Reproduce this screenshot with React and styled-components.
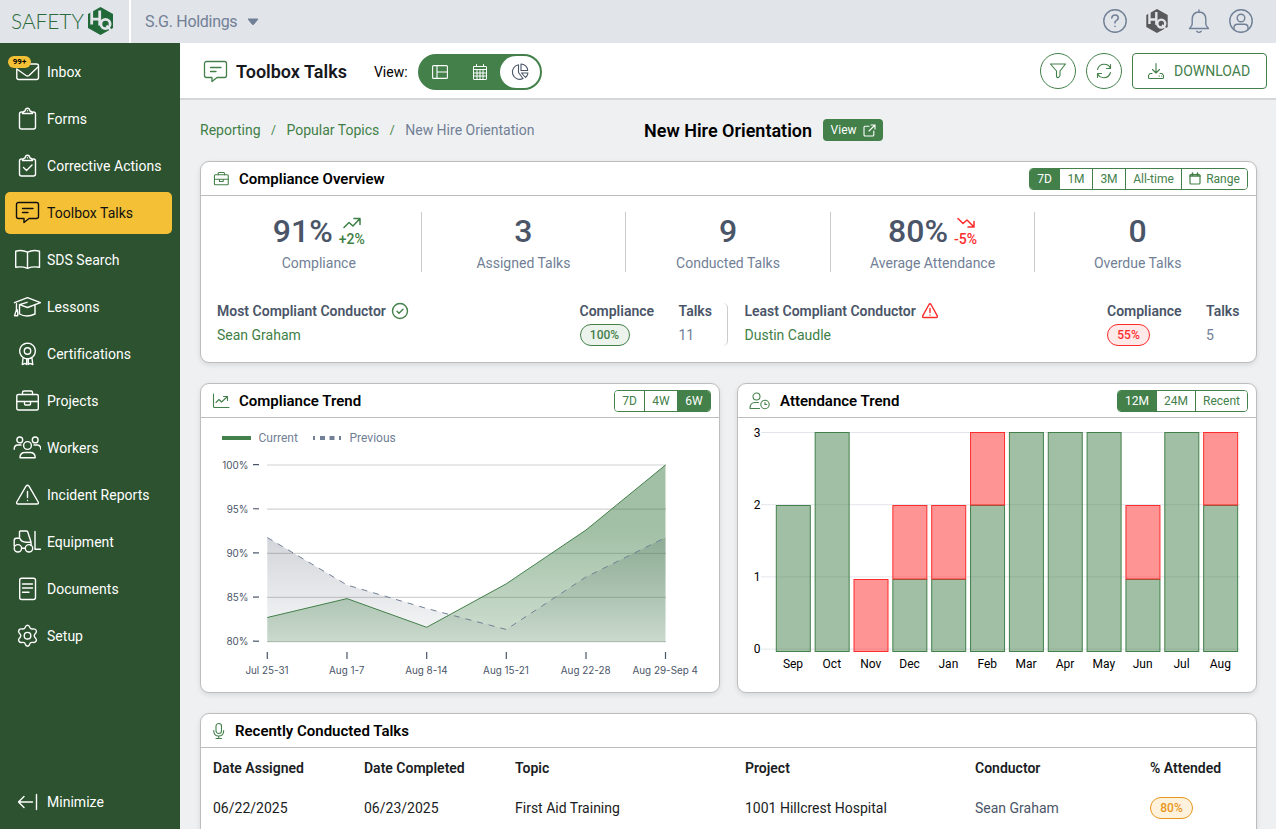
import React from "react";
import styled, { createGlobalStyle } from "styled-components";

const c = {
  green: "#43804a",
  greenText: "#3f7f46",
  side: "#2c522f",
  yellow: "#f4c035",
  slate: "#718096",
  dark: "#4a5568",
  red: "#fb2c2c",
  line: "#bdbdbd",
};

const GlobalStyle = createGlobalStyle`
  * { box-sizing: border-box; }
  body { margin: 0; background: #eff0f2; font-family: Roboto, "Liberation Sans", sans-serif; font-size: 14px; color: #000; overflow: hidden; }
`;

const Page = styled.div`
  display: flex;
  flex-direction: column;
  width: 1276px;
  height: 829px;
  overflow: hidden;
`;

const TopBar = styled.header`
  display: flex;
  align-items: center;
  flex: none;
  height: 43px;
  background: #e1e4e9;
  color: ${c.slate};
`;

const LogoCell = styled.div`
  display: flex;
  align-items: center;
  width: 131px;
  height: 43px;
  padding: 0 0 1px 11px;
  border-right: 2px solid #fff;
`;

const LogoText = styled.span`
  width: 76px;
  font-family: Lato, sans-serif;
  font-weight: 300;
  font-size: 20.8px;
  line-height: 40px;
  color: #2b6a3b;
  white-space: nowrap;
`;

const Company = styled.div`
  display: flex;
  align-items: center;
  gap: 10px;
  flex: 1;
  padding-left: 14px;
  font-size: 16px;
  letter-spacing: -0.3px;
`;

const TopIcons = styled.div`
  display: flex;
  align-items: center;
  gap: 18px;
  padding: 0 23px 1px 0;
`;

const Body = styled.div`
  display: flex;
  flex: 1;
  min-height: 0;
`;

const Sidebar = styled.nav`
  display: flex;
  flex-direction: column;
  justify-content: space-between;
  flex: none;
  width: 180px;
  padding: 8px 8px 6px 5px;
  background: ${c.side};
`;

const NavList = styled.div`
  display: flex;
  flex-direction: column;
  gap: 5px;
`;

const NavItem = styled.div`
  position: relative;
  display: flex;
  align-items: center;
  gap: 6px;
  height: 42px;
  padding-left: 8px;
  border-radius: 5px;
  font-size: 14px;
  letter-spacing: 0.02px;
  white-space: nowrap;
  color: ${(p) => (p.$active ? "#111" : "#fff")};
  background: ${(p) => (p.$active ? c.yellow : "transparent")};
`;

const Badge = styled.span`
  position: absolute;
  left: 3px;
  top: 5px;
  width: 23px;
  height: 12px;
  border-radius: 6px;
  background: ${c.yellow};
  color: #000;
  font-size: 8px;
  font-weight: 700;
  line-height: 12px;
  text-align: center;
`;

const Main = styled.main`
  display: flex;
  flex-direction: column;
  flex: 1;
  min-width: 0;
`;

const PageHead = styled.div`
  display: flex;
  align-items: center;
  flex: none;
  height: 57px;
  padding: 2px 9px 0 21px;
  border-bottom: 2px solid #d5d6d8;
  background: #fff;
`;

const HeadIcon = styled.div`
  padding-top: 1px;
  color: ${c.green};
`;

const PageTitle = styled.h1`
  margin: 0 27px 0 7px;
  font-size: 18px;
  font-weight: 600;
  line-height: 22px;
  color: #16181d;
`;

const ViewLabel = styled.span`
  width: 44px;
`;

const Toggle = styled.div`
  display: flex;
  align-items: center;
  width: 124px;
  height: 36px;
  padding: 2px;
  border-radius: 18px;
  background: ${c.green};
`;

const ToggleOption = styled.div`
  display: flex;
  align-items: center;
  justify-content: center;
  width: 40px;
  height: 32px;
  border-radius: 16px;
  background: ${(p) => (p.$on ? "#fff" : "transparent")};
  color: ${(p) => (p.$on ? c.dark : "#fff")};
`;

const HeadActions = styled.div`
  display: flex;
  gap: 10px;
  margin-left: auto;
  margin-top: -1px;
  color: ${c.green};
`;

const RoundButton = styled.div`
  display: flex;
  align-items: center;
  justify-content: center;
  width: 36px;
  height: 36px;
  border: 1px solid ${c.green};
  border-radius: 50%;
`;

const DownloadButton = styled.div`
  display: flex;
  align-items: center;
  gap: 9px;
  width: 135px;
  height: 36px;
  padding-left: 14px;
  border: 1px solid ${c.green};
  border-radius: 4px;
  font-size: 14px;
`;

const Content = styled.div`
  display: flex;
  flex-direction: column;
  padding: 0 19px 0 20px;
`;

const CrumbRow = styled.div`
  display: flex;
  align-items: center;
  flex: none;
  height: 61px;
  padding-bottom: 1px;
`;

const Crumbs = styled.div`
  display: flex;
  align-items: center;
  width: 444px;
  gap: 10.5px;
  color: ${c.greenText};
`;

const CrumbSlash = styled.span`
  font-size: 12px;
`;

const CrumbCurrent = styled.span`
  color: ${c.slate};
`;

const TopicTitle = styled.h2`
  margin: 0 11px 0 0;
  padding-top: 1px;
  font-size: 18px;
  font-weight: 600;
  line-height: 22px;
`;

const ViewButton = styled.div`
  display: flex;
  align-items: center;
  justify-content: center;
  gap: 6px;
  width: 60px;
  height: 22px;
  border-radius: 4px;
  background: ${c.green};
  color: #fff;
  font-size: 12px;
`;

const Card = styled.section`
  flex: ${(p) => (p.$grow ? "1" : "none")};
  height: ${(p) => p.$h}px;
  border: 1px solid ${c.line};
  border-radius: 9px;
  background: #fff;
  box-shadow: 0 2px 5px rgba(0, 0, 0, 0.1);
  overflow: hidden;
`;

const CardHead = styled.div`
  display: flex;
  align-items: center;
  gap: ${(p) => p.$gap || 9}px;
  height: 34px;
  padding: 0 8px 0 11px;
  border-bottom: 1px solid ${c.line};
  color: ${c.green};
`;

const CardTitle = styled.h3`
  flex: 1;
  margin: 0;
  font-size: 15px;
  font-weight: 600;
  line-height: 20px;
  color: #000;
`;

const Segments = styled.div`
  display: flex;
  height: 22px;
  border: 1px solid ${c.green};
  border-radius: 4px;
  overflow: hidden;
`;

const Segment = styled.div`
  display: flex;
  align-items: center;
  justify-content: center;
  gap: 5px;
  width: ${(p) => p.$w}px;
  font-size: 12px;
  color: ${(p) => (p.$on ? "#fff" : c.green)};
  background: ${(p) => (p.$on ? c.green : "#fff")};
  & + & { border-left: 1px solid ${c.green}; }
`;

const Stats = styled.div`
  display: grid;
  grid-template-columns: repeat(5, 1fr);
  grid-template-rows: 60px;
  height: 60px;
  margin: 16px 16px 0;
`;

const Stat = styled.div`
  display: flex;
  flex-direction: column;
  align-items: center;
  color: ${c.slate};
  &:not(:last-child) { border-right: 1px solid #ccc; }
`;

const StatTop = styled.div`
  display: flex;
  flex: none;
  align-items: center;
  gap: 6px;
  height: 38px;
  color: ${c.dark};
`;

const StatValue = styled.span`
  font-size: 32px;
  font-weight: 500;
  line-height: 38px;
`;

const Delta = styled.span`
  display: flex;
  flex-direction: column;
  align-items: center;
  gap: 2px;
  padding-top: 1px;
  font-size: 14px;
  font-weight: 500;
  line-height: 16px;
  color: ${(p) => (p.$down ? c.red : c.greenText)};
`;

const StatLabel = styled.span`
  line-height: 26px;
`;

const Conductors = styled.div`
  display: grid;
  grid-template-columns: 511px 1fr;
  margin: 31px 16px 0;
`;

const Conductor = styled.div`
  display: grid;
  grid-template-columns: 1fr 99px ${(p) => (p.$first ? "48.5px" : "34px")};
  grid-template-rows: 16px 27px;
  align-items: center;
  height: 43px;
  padding-left: ${(p) => (p.$first ? 0 : 16.5)}px;
  border-right: ${(p) => (p.$first ? "1px solid #ccc" : "none")};
  border-radius: ${(p) => (p.$first ? 5 : 0)}px;
`;

const ConductorHead = styled.span`
  display: flex;
  align-items: center;
  gap: 5px;
  height: 16px;
  font-weight: 600;
  line-height: 16px;
  color: ${c.dark};
  white-space: nowrap;
`;

const Person = styled.span`
  padding-top: 4px;
  color: ${(p) => (p.$muted ? c.slate : c.greenText)};
`;

const tones = {
  good: [c.green, "#ecf3ed"],
  bad: [c.red, "#ffe9e9"],
  warn: ["#e8971c", "#fef2dd"],
};

const Pill = styled.span`
  display: inline-flex;
  align-items: center;
  justify-content: center;
  width: ${(p) => p.$w}px;
  height: 22px;
  margin-top: ${(p) => p.$mt || 0}px;
  border: 1px solid ${(p) => tones[p.$tone][0]};
  border-radius: 11px;
  background: ${(p) => tones[p.$tone][1]};
  color: ${(p) => tones[p.$tone][0]};
  font-size: 12px;
  font-weight: 500;
`;

const Trends = styled.div`
  display: flex;
  gap: 17px;
  margin: 20px 0;
`;

const Chart = styled.svg`
  display: block;
`;

const Icon = styled.svg`
  display: block;
  flex: none;
  fill: none;
  stroke: currentColor;
  stroke-width: ${(p) => p.$sw || 1.4};
  stroke-linecap: round;
  stroke-linejoin: round;
`;

const Table = styled.div`
  display: grid;
  grid-template-columns: 151px 151px 230px 230px 175px 1fr;
  grid-auto-rows: 40px;
  align-items: center;
  padding-left: 12px;
`;

const Th = styled.span`
  font-weight: 600;
  color: #1a1d23;
`;

const Td = styled.span`
  color: ${(p) => (p.$muted ? c.dark : "#1a1d23")};
`;

const shapes = {
  inbox: (
    <>
      <path d="M14 6h9.5a2 2 0 0 1 2 2v11.500a2 2 0 0 1-2 2H5.800a2 2 0 0 1-2-2V11" />
      <path d="M4.500 11.500l8.500 6q1.500 1 3 0l9-8.500" />
    </>
  ),
  forms: (
    <>
      <path d="M9 7H8.500a2 2 0 0 0-2 2v13a2 2 0 0 0 2 2h12a2 2 0 0 0 2-2V9a2 2 0 0 0-2-2H20" />
      <path d="M9.500 8.500q0-2 2.500-2.500q.5-2.800 2.500-2.800T17 6q2.500.5 2.500 2.500z" />
      <path d="M14.500 5.700v.1" />
    </>
  ),
  bubble: (
    <>
      <path d="M5.500 3.500h18a2 2 0 0 1 2 2v12a2 2 0 0 1-2 2H16l-5 4v-4H5.500a2 2 0 0 1-2-2v-12a2 2 0 0 1 2-2z" />
      <path d="M9.500 9.500h10.500M9.500 13.500h5.500" />
    </>
  ),
  book: (
    <path d="M14.500 6.200Q9 3.500 2.700 5.200V21.300Q9 20.200 14.500 22.300Q20 20.200 26.500 21.300V5.200Q20 3.500 14.500 6.200zM14.500 6.200v16" />
  ),
  cap: (
    <>
      <path d="M1.500 9.700L14.500 4.700L27.500 9.700L14.500 14.500L6.500 11.700L14 9.300" />
      <path d="M6.500 12.500V21q7 4 15.500 0v-8.500M3.500 10.700q.8 6-2 12h3.200q.5-2-.5-6" />
    </>
  ),
  award: (
    <>
      <circle cx="14.500" cy="11" r="7.800" strokeDasharray="3 .5" />
      <circle cx="14.500" cy="11" r="3.200" />
      <path d="M10 18.500L9.300 24.500L12 23.400L13.700 24.500V19.500M19 18.500L19.800 24.500L17 23.400L15.300 24.500V19.500" />
    </>
  ),
  briefcase: (
    <>
      <rect x="3.800" y="7.500" width="21.500" height="15.500" rx="1.500" />
      <path d="M9.500 7.500V5.500a1.500 1.500 0 0 1 1.500-1.500h7a1.500 1.500 0 0 1 1.500 1.500v2M3.800 14.500h21.500M11.500 14.500v2.500q0 1 1 1h4q1 0 1-1v-2.500" />
    </>
  ),
  workers: (
    <>
      <circle cx="6.800" cy="5.900" r="2.900" />
      <circle cx="22.200" cy="5.900" r="2.900" />
      <circle cx="14.500" cy="11.500" r="3.900" />
      <path d="M7 23.700h15.200q0-5.200-5-5.200h-5.200q-5 0-5 5.200zM1.200 15.300q0-4.300 3.600-4.300h3.200M27.800 15.300q0-4.300-3.600-4.300H21" />
    </>
  ),
  warning: (
    <>
      <path d="M13 5.200q1.500-2 3 0L25.200 21q.8 2-1.200 2H5q-2 0-1.200-2z" />
      <path d="M14.500 10.500v6M14.500 19.500v.1" />
    </>
  ),
  forklift: (
    <>
      <circle cx="4.900" cy="20.300" r="3.700" />
      <circle cx="16" cy="20.300" r="3.700" />
      <path d="M1.200 18V12.500q0-2 2-2.200L6.500 10V4q0-1 1-1h6q.8 0 1.200.8L18 14v3.500M7 10.500q1 3.500 6 3.700H18M8.600 20.300h3.700M22 3.500V21.200h5.500" />
    </>
  ),
  document: (
    <>
      <rect x="6.700" y="3.200" width="15.800" height="21.300" rx="2" />
      <path d="M9.500 9h10M9.500 13h10M9.500 17.200h6.500" />
    </>
  ),
  gear: (
    <>
      <circle cx="14.500" cy="13.700" r="3.300" />
      <path d="M12.300 5.200q.5-2 2.200-2t2.200 2q.5 2.200 3 1.800q2.300-.6 3.300 1t-.2 3q-1.600 1.600-1.600 2.700t1.600 2.700q1.200 1.500.2 3t-3.300 1q-2.500-.4-3 1.800q-.5 2-2.200 2t-2.200-2q-.5-2.200-3-1.800q-2.300.6-3.300-1t.2-3q1.600-1.600 1.600-2.700t-1.600-2.700q-1.200-1.500-.2-3t3.300-1q2.500.4 3-1.800z" />
    </>
  ),
  minimize: <path d="M5.500 14h14M11 8.500L5.500 14L11 19.500M23.500 6.500v15" />,
};
shapes.check = (
  <>
    {shapes.forms}
    <path d="M10.500 15.500l3 3l5.500-5.500" />
  </>
);

const navItems = [
  ["inbox", "Inbox"],
  ["forms", "Forms"],
  ["check", "Corrective Actions"],
  ["bubble", "Toolbox Talks"],
  ["book", "SDS Search"],
  ["cap", "Lessons"],
  ["award", "Certifications"],
  ["briefcase", "Projects"],
  ["workers", "Workers"],
  ["warning", "Incident Reports"],
  ["forklift", "Equipment"],
  ["document", "Documents"],
  ["gear", "Setup"],
];

const Glyph = ({ name, size = 28, sw }) => (
  <Icon width={size} height={size} viewBox="0 0 28 28" $sw={sw}>
    {shapes[name]}
  </Icon>
);

const HexMark = ({ color, bg, width, height }) => (
  <svg width={width} height={height} viewBox="0 0 26 28">
    <path d="M13 0L25.500 7V21L13 28L.5 21V7z" fill={color} />
    <g fill="none" stroke={bg} strokeWidth="2.800">
      <path d="M4.200 3v14.500M4.200 12.200h8M12.200 3.500v15" />
      <circle cx="18" cy="17" r="4.600" />
      <path d="M19 18.500l4.500 5" strokeWidth="2" />
    </g>
  </svg>
);

const SegmentGroup = ({ items, active }) => (
  <Segments>
    {items.map(([label, w]) => (
      <Segment key={label} $w={w} $on={label === active}>
        {label === "Range" && (
          <Icon width="12" height="13" viewBox="0 0 12 13" $sw={1.2}>
            <rect x="1" y="2.500" width="10" height="9.500" rx="1" />
            <path d="M1 4h10M3.500 1v2M8.500 1v2" strokeWidth="1.600" />
          </Icon>
        )}
        {label}
      </Segment>
    ))}
  </Segments>
);

const Arrow = ({ down }) => (
  <Icon width="20" height="12" viewBox="0 0 20 12" $sw={1.5}>
    {down ? (
      <path d="M2 1.500l5 5l4-3.500l7 7M18 4.500v5.500h-6" />
    ) : (
      <path d="M2 10.500l5-5l4 3.500l7-7.500M12 1.500h6v6" />
    )}
  </Icon>
);

const stats = [
  ["91%", "Compliance", "+2%"],
  ["3", "Assigned Talks"],
  ["9", "Conducted Talks"],
  ["80%", "Average Attendance", "-5%"],
  ["0", "Overdue Talks"],
];

const weekX = [66.3, 146, 225.7, 305.3, 385, 464.5];
const weeks = ["Jul 25-31", "Aug 1-7", "Aug 8-14", "Aug 15-21", "Aug 22-28", "Aug 29-Sep 4"];
const current = [199.5, 180.6, 209.3, 165.8, 112, 47];
const previous = [119.5, 167, 190.5, 211.5, 159, 119.5];
const toLine = (ys) => ys.map((y, i) => `${i ? "L" : "M"}${weekX[i]} ${y}`).join("");
const toArea = (ys) => `${toLine(ys)}L464.5 224L66.3 224Z`;

const TrendChart = () => (
  <Chart width="518" height="274" viewBox="0 0 518 274">
    <defs>
      <linearGradient id="cur" gradientUnits="userSpaceOnUse" x1="0" y1="47" x2="0" y2="224">
        <stop offset="0" stopColor="#43804a" stopOpacity=".5" />
        <stop offset=".35" stopColor="#43804a" stopOpacity=".5" />
        <stop offset="1" stopColor="#43804a" stopOpacity=".25" />
      </linearGradient>
      <linearGradient id="prev" gradientUnits="userSpaceOnUse" x1="0" y1="119" x2="0" y2="224">
        <stop offset="0" stopColor="#4a5568" stopOpacity=".25" />
        <stop offset="1" stopColor="#4a5568" stopOpacity=".04" />
      </linearGradient>
    </defs>
    <path d="M21 20h29" stroke={c.green} strokeWidth="4" />
    <path d="M112 20h30" stroke={c.slate} strokeWidth="4" strokeDasharray="2 5 5 4.500 5 4.500 2 9" />
    <g fontSize="12" fill={c.slate}>
      <text x="57.500" y="24">Current</text>
      <text x="148.500" y="24">Previous</text>
    </g>
    {[100, 95, 90, 85, 80].map((v, i) => (
      <g key={v}>
        <path d={`M66 ${47 + i * 44.15}H465`} stroke="#d2d2d2" strokeWidth="1.200" />
        <path d={`M52 ${46.6 + i * 44.15}h6`} stroke={c.dark} strokeWidth="1.200" />
        <text x="47.500" y={50.7 + i * 44.15} textAnchor="end" fontFamily="Inter" fontSize="9.900" fill={c.dark}>{v}%</text>
      </g>
    ))}
    <path d={toArea(previous)} fill="url(#prev)" />
    <path d={toArea(current)} fill="url(#cur)" />
    <path d={toLine(current)} fill="none" stroke={c.green} />
    <path d={toLine(previous)} fill="none" stroke={c.slate} strokeDasharray="6 6" />
    {weeks.map((w, i) => (
      <g key={w}>
        <path d={`M${weekX[i]} 234v7`} stroke={c.dark} strokeWidth="1.200" />
        <text x={weekX[i] - 0.3} y="256" textAnchor="middle" fontFamily="Inter" fontSize="9.900" fill={c.dark}>{w}</text>
      </g>
    ))}
  </Chart>
);

const months = [
  ["Sep", 2, 0], ["Oct", 3, 0], ["Nov", 0, 1], ["Dec", 1, 1], ["Jan", 1, 1], ["Feb", 2, 1],
  ["Mar", 3, 0], ["Apr", 3, 0], ["May", 3, 0], ["Jun", 1, 1], ["Jul", 3, 0], ["Aug", 2, 1],
];
const barTop = [233.5, 161.5, 87.5, 14.5];

const AttendanceChart = () => (
  <Chart width="518" height="274" viewBox="0 0 518 274" fontSize="12">
    {[3, 2, 1, 0].map((v, i) => (
      <g key={v}>
        <path d={`M23 ${14.5 + i * 72.2}H502`} stroke="#e2e5eb" />
        <text x="22.500" y={19 + i * 72.1} textAnchor="end">{v}</text>
      </g>
    ))}
    {months.map(([m, good, bad], i) => {
      const x = 38.3 + i * 38.85;
      const mid = barTop[good];
      const top = barTop[good + bad];
      return (
        <g key={m}>
          {good > 0 && (
            <rect x={x} y={mid} width="34" height={233.5 - mid} fill="#43804a" fillOpacity=".5" stroke={c.green} />
          )}
          {bad > 0 && (
            <rect x={x} y={top} width="34" height={mid - top - (good > 0 ? 0.5 : 0)} fill="#ff2a2a" fillOpacity=".5" stroke={c.red} />
          )}
          <text x={x + 16.7} y="250" textAnchor="middle">{m}</text>
        </g>
      );
    })}
  </Chart>
);

export default function App() {
  return (
    <Page>
      <GlobalStyle />
      <TopBar>
        <LogoCell>
          <LogoText>SAFETY</LogoText>
          <HexMark color="#22693a" bg="#e1e4e9" width="27" height="28" />
        </LogoCell>
        <Company>
          S.G. Holdings
          <svg width="12" height="8" viewBox="0 0 12 8">
            <path d="M1 1h10L6.500 6.500q-.5.500-1 0z" fill={c.slate} stroke={c.slate} strokeLinejoin="round" />
          </svg>
        </Company>
        <TopIcons>
          <Icon width="24" height="24" viewBox="0 0 24 24">
            <circle cx="12" cy="12" r="11.200" />
            <path d="M8.800 9q.4-3 3.300-3t3.200 2.700q0 1.700-1.800 2.700t-1.500 2.400M12 17.300v.2" strokeWidth="1.600" />
          </Icon>
          <HexMark color="#58595b" bg="#e1e4e9" width="24" height="24" />
          <Icon width="24" height="26" viewBox="0 0 24 26">
            <path d="M12 2v2M12 4q6.500.3 6.800 7v5q0 1.800 2.700 4.500h-19q2.700-2.700 2.700-4.500v-5Q5.500 4.300 12 4zM9.800 23.200q2.200 2.400 4.400 0" />
          </Icon>
          <Icon width="24" height="24" viewBox="0 0 24 24">
            <circle cx="12" cy="12" r="11.200" />
            <circle cx="12" cy="9" r="3.800" />
            <path d="M5 20v-1.500q0-3.300 3.500-3.300h7q3.500 0 3.500 3.300V20" />
          </Icon>
        </TopIcons>
      </TopBar>
      <Body>
        <Sidebar>
          <NavList>
            {navItems.map(([icon, label]) => (
              <NavItem key={label} $active={label === "Toolbox Talks"}>
                <Glyph name={icon} />
                {label}
                {icon === "inbox" && <Badge>99+</Badge>}
              </NavItem>
            ))}
          </NavList>
          <NavItem>
            <Glyph name="minimize" />
            Minimize
          </NavItem>
        </Sidebar>
        <Main>
          <PageHead>
            <HeadIcon>
              <Glyph name="bubble" sw={1.3} />
            </HeadIcon>
            <PageTitle>Toolbox Talks</PageTitle>
            <ViewLabel>View:</ViewLabel>
            <Toggle>
              <ToggleOption>
                <Icon width="16" height="14" viewBox="0 0 16 14" $sw={1.1}>
                  <rect x=".6" y=".6" width="14.800" height="12.800" rx="1" />
                  <path d="M5 .6v12.800M5 7h10.400" />
                </Icon>
              </ToggleOption>
              <ToggleOption>
                <Icon width="16" height="16" viewBox="0 0 16 16" $sw={1}>
                  <rect x="1.500" y="2.500" width="13" height="13" rx=".5" />
                  <path d="M1.500 5.500h13M1.500 9h13M1.500 12h13M5 5.500v10M8 5.500v10M11 5.500v10M4.500.5v2M11.500.5v2" />
                </Icon>
              </ToggleOption>
              <ToggleOption $on>
                <Icon width="18" height="18" viewBox="0 0 18 18" $sw={1.1}>
                  <path d="M7.500 1.800A7.300 7.300 0 1 0 12 15.500L7.500 9.500z" />
                  <path d="M10 1V7.500h6.700A6.700 6.700 0 0 0 10 1zM10.500 10h6.500q-.5 3-2.500 4.500z" />
                </Icon>
              </ToggleOption>
            </Toggle>
            <HeadActions>
              <RoundButton>
                <Icon width="18" height="18" viewBox="0 0 18 18" $sw={1.1}>
                  <path d="M1.500 2h15L11 9v4.500L9.500 15.500Q8 16 7.500 14.500V9z" />
                </Icon>
              </RoundButton>
              <RoundButton>
                <Icon width="18" height="18" viewBox="0 0 18 18" $sw={1.1}>
                  <path d="M2.500 7.500Q4 2.300 9 2.300t6.300 4M15.500 2.500v4h-4M15.500 10.500Q14 15.700 9 15.700t-6.300-4M2.500 15.500v-4h4" />
                </Icon>
              </RoundButton>
              <DownloadButton>
                <Icon width="18" height="18" viewBox="0 0 18 18" $sw={1.1}>
                  <path d="M9 1.500v9M5.500 7.500L9 11l3.500-3.500M5 11.500H3l-1.500 2v2q0 1 1 1h13q1 0 1-1v-2l-1.500-2H13M12 14h.5M14.500 14h.1" />
                </Icon>
                DOWNLOAD
              </DownloadButton>
            </HeadActions>
          </PageHead>
          <Content>
            <CrumbRow>
              <Crumbs>
                <span>Reporting</span>
                <CrumbSlash>/</CrumbSlash>
                <span>Popular Topics</span>
                <CrumbSlash>/</CrumbSlash>
                <CrumbCurrent>New Hire Orientation</CrumbCurrent>
              </Crumbs>
              <TopicTitle>New Hire Orientation</TopicTitle>
              <ViewButton>
                View
                <Icon width="13" height="13" viewBox="0 0 13 13" $sw={1.1}>
                  <path d="M6 2.200H2q-1 0-1 1V11q0 1 1 1h7.800q1 0 1-1V7M8 1h4v4M12 1L6 7" />
                </Icon>
              </ViewButton>
            </CrumbRow>
            <Card $h={202}>
              <CardHead>
                <Glyph name="briefcase" size={18} sw={1.7} />
                <CardTitle>Compliance Overview</CardTitle>
                <SegmentGroup
                  active="7D"
                  items={[["7D", 29], ["1M", 33], ["3M", 33], ["All-time", 56], ["Range", 66]]}
                />
              </CardHead>
              <Stats>
                {stats.map(([value, label, delta]) => (
                  <Stat key={label}>
                    <StatTop>
                      <StatValue>{value}</StatValue>
                      {delta && (
                        <Delta $down={delta[0] === "-"}>
                          <Arrow down={delta[0] === "-"} />
                          {delta}
                        </Delta>
                      )}
                    </StatTop>
                    <StatLabel>{label}</StatLabel>
                  </Stat>
                ))}
              </Stats>
              <Conductors>
                <Conductor $first>
                  <ConductorHead>
                    Most Compliant Conductor
                    <Icon width="18" height="18" viewBox="0 0 18 18" color={c.green}>
                      <circle cx="9" cy="9" r="7.500" />
                      <path d="M6 9.300l2 2l4-4" />
                    </Icon>
                  </ConductorHead>
                  <ConductorHead>Compliance</ConductorHead>
                  <ConductorHead>Talks</ConductorHead>
                  <Person>Sean Graham</Person>
                  <Pill $w={50} $mt={5} $tone="good">100%</Pill>
                  <Person $muted>11</Person>
                </Conductor>
                <Conductor>
                  <ConductorHead>
                    Least Compliant Conductor
                    <Icon width="18" height="18" viewBox="0 0 18 18" color={c.red}>
                      <path d="M8 2.500q1-1.400 2 0l6.300 11.300q.5 1.700-1 1.700H2.700q-1.500 0-1-1.700zM9 6.500v4M9 13v.1" />
                    </Icon>
                  </ConductorHead>
                  <ConductorHead>Compliance</ConductorHead>
                  <ConductorHead>Talks</ConductorHead>
                  <Person>Dustin Caudle</Person>
                  <Pill $w={43} $mt={5} $tone="bad">55%</Pill>
                  <Person $muted>5</Person>
                </Conductor>
              </Conductors>
            </Card>
            <Trends>
              <Card $grow $h={310}>
                <CardHead>
                  <Icon width="18" height="18" viewBox="0 0 18 18" $sw={1.1}>
                    <path d="M1.500 2v12.500q0 1 1 1H17M4 10.500l3-3l2.500 2.500l5.500-5M11.500 4.500h4v4" />
                  </Icon>
                  <CardTitle>Compliance Trend</CardTitle>
                  <SegmentGroup active="6W" items={[["7D", 29], ["4W", 33], ["6W", 33]]} />
                </CardHead>
                <TrendChart />
              </Card>
              <Card $grow $h={310}>
                <CardHead $gap={10}>
                  <Icon width="21" height="18" viewBox="0 0 21 18" $sw={1.1}>
                    <circle cx="7.500" cy="4.500" r="3.500" />
                    <path d="M10.500 16.500H1q0-6 5-6h3.500" />
                    <circle cx="16" cy="12.500" r="4.200" />
                    <path d="M16 10.500v2h1.800" />
                  </Icon>
                  <CardTitle>Attendance Trend</CardTitle>
                  <SegmentGroup active="12M" items={[["12M", 38], ["24M", 39], ["Recent", 52]]} />
                </CardHead>
                <AttendanceChart />
              </Card>
            </Trends>
            <Card $h={140}>
              <CardHead $gap={10}>
                <Icon width="13" height="18" viewBox="0 0 13 18" $sw={1.1}>
                  <rect x="4" y="1.500" width="5.500" height="10" rx="2.750" />
                  <path d="M1.700 8.500q0 5.500 5 5.500t5-5.500M6.700 14v2.500M4 16.500h5.500" />
                </Icon>
                <CardTitle>Recently Conducted Talks</CardTitle>
              </CardHead>
              <Table>
                <Th>Date Assigned</Th>
                <Th>Date Completed</Th>
                <Th>Topic</Th>
                <Th>Project</Th>
                <Th>Conductor</Th>
                <Th>% Attended</Th>
                <Td>06/22/2025</Td>
                <Td>06/23/2025</Td>
                <Td>First Aid Training</Td>
                <Td>1001 Hillcrest Hospital</Td>
                <Td $muted>Sean Graham</Td>
                <span>
                  <Pill $w={43} $tone="warn">80%</Pill>
                </span>
              </Table>
            </Card>
          </Content>
        </Main>
      </Body>
    </Page>
  );
}
